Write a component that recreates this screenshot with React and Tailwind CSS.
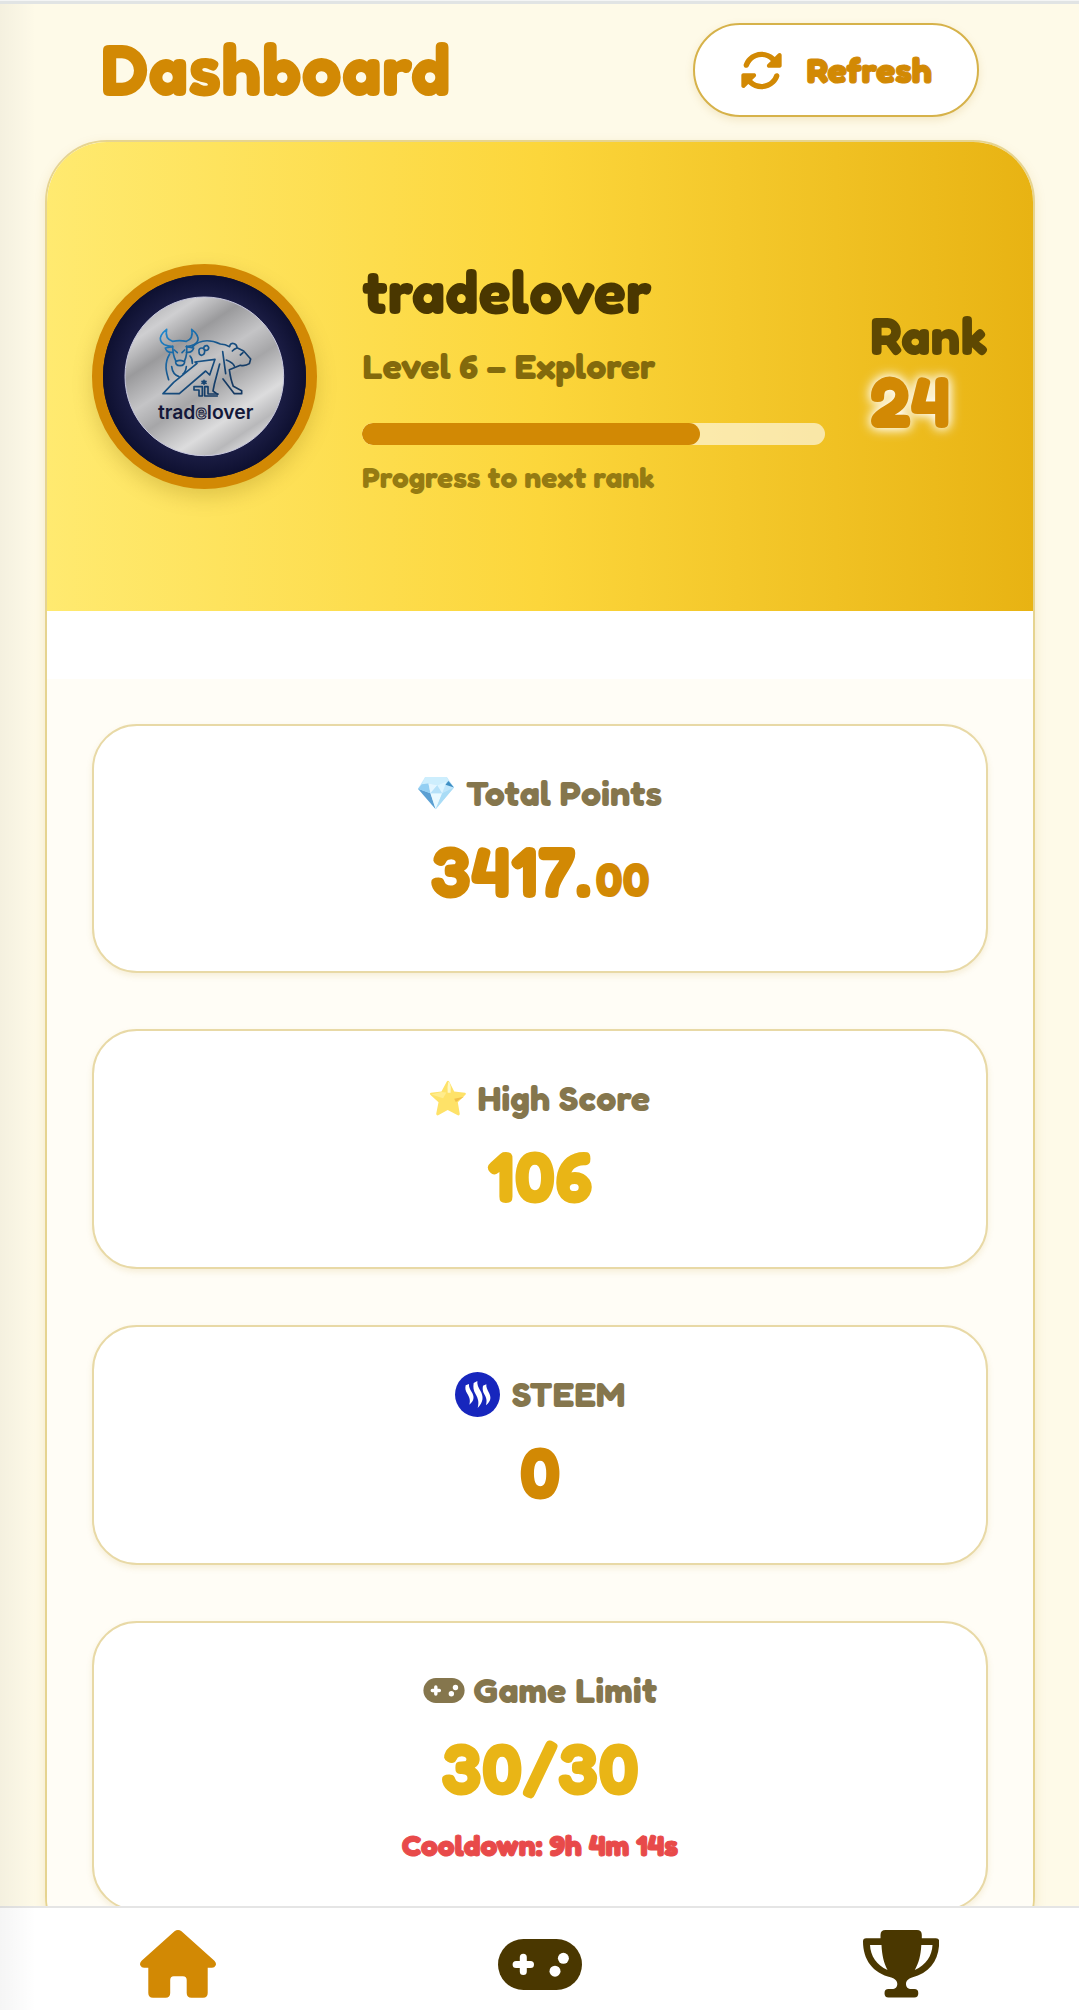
import { useState } from 'react';
import { FaRotate } from 'react-icons/fa6';

// --- ICONS ---
const HomeIcon = ({ className }) => (
  <svg viewBox="0 0 76 68" className={className} fill="currentColor" aria-hidden="true">
    <path d="M34.5 1.3q3.5-2.6 7 0L74.4 30.800q2.400 2.600 1.200 4.700-1.100 2.300-3.600 2.300h-4.300V63q0 4.700-4.700 4.700h-11.500q-4.800 0-4.800-4.700V50q0-3.800-3.800-3.800h-9.200q-3.500 0-3.500 3.800v13q0 4.700-4.700 4.700H13q-4.700 0-4.700-4.700V37.800H4q-2.500 0-3.600-2.300-1.200-2.100 1.200-4.700z" />
  </svg>
);

const GamepadIcon = ({ className }) => (
  <svg viewBox="0 0 84 51" className={className} aria-hidden="true">
    <rect width="84" height="51" rx="25.500" fill="currentColor" />
    <path d="M25.300 18.200v14.400M18.100 25.400h14.400" stroke="#fff" strokeWidth="7" strokeLinecap="round" />
    <circle cx="65.400" cy="19.300" r="5.500" fill="#fff" />
    <circle cx="57" cy="32.200" r="5.500" fill="#fff" />
  </svg>
);

const TrophyIcon = ({ className }) => (
  <svg viewBox="0 0 76 68" className={className} fill="currentColor" fillRule="evenodd" aria-hidden="true">
    <path d="M22.500 0h31.400q4.900 0 4.900 5v3.300H73q3.200 0 3.200 3.200C76.200 29.500 67.500 43 49 47.500c-3.500 1-6 3.300-6 6.500 0 3 2 5 5.300 5h3q4 0 4 4.200t-4 4.200H25.500q-4 0-4-4.200t4-4.200H29c3.300 0 5.300-2 5.300-5 0-3.200-2.500-5.500-6-6.500C9.500 43 0 29.500 0 11.500q0-3.200 3.200-3.200h14.300V5q0-5 5-5zM7 15c.5 11 6.500 20 17.500 25-3.700-7-5.500-15-6-25zM58.300 15c-.5 10-2.500 18-6.500 25C63 35 69 26 69.500 15z" />
  </svg>
);

const DiamondIcon = () => (
  <svg viewBox="116 53 110 100" className="w-9 h-[34px]" aria-hidden="true">
    <path d="M138 54h66l22 32-56 67-54-63z" fill="#bfe6fb" />
    <path d="M138 54h66l5 12-34 13-27-5-20 2z" fill="#cdeefd" />
    <path d="M116 90l38 14 16 49z" fill="#5b9fd2" />
    <path d="M154 104l36 0-20 49z" fill="#e8f9ff" />
    <path d="M190 104l36-18-56 67z" fill="#a9dcf6" />
    <path d="M128 76l20-2 6 30-38-14z" fill="#93cff3" />
    <path d="M148 74l27 5-21 25z" fill="#e4f6ff" />
    <path d="M175 79l15 25h-36z" fill="#b5e1f9" />
    <path d="M175 79l28-11-13 36z" fill="#dcf4ff" />
    <path d="M209 66l17 20-26-8z" fill="#3f8fc4" />
  </svg>
);

const StarIcon = () => (
  <svg viewBox="152 32 110 108" className="w-9 h-9" aria-hidden="true">
    <path d="M203 36q4-6 8 0l15 30 33 4q5 2 1 6l-23 23 6 36q-1 6-6 4l-31-16-29 16q-6 1-6-5l7-35-25-23q-3-4 2-6l32-4z" fill="#fee268" />
    <path d="M208 36q-4 16-2 34l9 0q3-16-3-31z" fill="#fff7c0" />
    <path d="M256 82l-30 6 5 10z" fill="#f2c04a" />
    <path d="M156 75l36 12 10-18-16-1z" fill="#ffec8c" />
  </svg>
);

const SteemIcon = () => (
  <svg viewBox="0 0 135 135" className="w-[45px] h-[45px]" aria-hidden="true">
    <circle cx="67.500" cy="67.500" r="67.500" fill="#1726bd" />
    <g fill="#fff">
      <path d="M32 40l10-4c-1 9 3 16 8 24 8 13 9 25-7 38 4-14 0-23-6-33-6-9-7-16-5-25z" />
      <path d="M56 33l11-6c-1 11 3 19 9 29 10 17 10 33-8 52 5-18 1-28-6-41-7-11-8-22-6-34z" />
      <path d="M84 41l10-4c-1 9 3 16 7 24 8 14 8 26-8 39 4-14 1-23-5-33-5-9-6-17-4-26z" />
    </g>
  </svg>
);

const Avatar = () => (
  <svg viewBox="70 75 609 609" role="img" aria-label="tradelover" className="w-full h-full">
    <defs>
      <linearGradient id="steel" x1="0.2" y1="0.05" x2="0.8" y2="0.95">
        <stop offset="0" stopColor="#b9b9bb" />
        <stop offset="0.1" stopColor="#cfcfd1" />
        <stop offset="0.26" stopColor="#9a9a9c" />
        <stop offset="0.44" stopColor="#c4c4c6" />
        <stop offset="0.58" stopColor="#a6a6a8" />
        <stop offset="0.78" stopColor="#dcdcdd" />
        <stop offset="0.9" stopColor="#b8b8ba" />
        <stop offset="1" stopColor="#e0e0e1" />
      </linearGradient>
      <radialGradient id="navy">
        <stop offset="0.75" stopColor="#1c1e46" />
        <stop offset="1" stopColor="#0e1030" />
      </radialGradient>
      <linearGradient id="ink" gradientUnits="userSpaceOnUse" x1="260" y1="240" x2="400" y2="430">
        <stop offset="0" stopColor="#1f86cc" />
        <stop offset="0.5" stopColor="#17568c" />
        <stop offset="1" stopColor="#153962" />
      </linearGradient>
    </defs>
    <rect x="70" y="75" width="609" height="609" fill="url(#navy)" />
    <circle cx="374" cy="379" r="238" fill="url(#steel)" stroke="#c9c9de" strokeWidth="3" />
    <g fill="none" stroke="url(#ink)" strokeWidth="5" strokeLinejoin="round" strokeLinecap="round">
      {/* horns */}
      <path d="M261 238c-28 22-27 48 18 52M261 238c-4 18-1 30 18 36M336 238c28 22 27 48-16 52M336 238c4 18 1 30-16 36M279 274q20-4 41 0" />
      {/* bull head */}
      <path d="M279 290l-22 4q4 15 22 13M320 290l22 4q-4 15-22 13M279 288q0 26 9 44-2 15 13 15t14-15q8-18 6-44M284 300l9 8M315 300l-8 8M290 334q10-6 22 0" />
      {/* bull body */}
      <path d="M270 312c-18 30-10 55-3 77M276 350q3 24 22 30M320 350q-2 16-10 22M331 318q8 8 7 22" />
      {/* rising arrow */}
      <path d="M250 431l32-34 70-57-6-4 60-8-16 47-12-12-79 68z" />
      {/* bear */}
      <path d="M337 292c25-26 58-22 85-10q15 1 28 8M450 290q2-13 14-9 8 3 8 12l20 10 21 24-4 14q-12 8-27 5l-33 13q4 30 12 50l25 13v9h-22l-34-44M420 342l-16 61-4 20 14 10M440 330q20 8 24 18" />
      <path d="M429 305l9 66M458 303q6-6 12-8M490 308l-8 7" />
      <path d="M358 305q-2-11 9-11 8 0 8 10 0 11-10 12-7-2-7-11zM372 294q2-9 11-7 7 5 2 12-6 5-12-1" />
      {/* monogram */}
      <path d="M343 410h25v28h-10v-18h-15zM375 410h10v22h30M375 410v28h38M373 391v12M367 394l12 6M379 394l-12 6" />
    </g>
    <text x="378" y="508" textAnchor="middle" fontSize="58" className="font-[Inter,sans-serif] font-semibold" fill="#14183a">
      trad<tspan fill="none" stroke="#14183a" strokeWidth="3">e</tspan>lover
    </text>
  </svg>
);

// --- CARD ---
function StatCard({ icon, label, value, cents, tone, note, gap = 'gap-3' }) {
  return (
    <section className={`rounded-[45px] border-2 border-[#e8d9a6] bg-white px-6 pt-[43px] text-center shadow-[0_3px_6px_rgba(180,130,0,0.12)] ${cents ? 'pb-[53px]' : 'pb-11'}`}>
      <h3 className={`flex h-12 items-center justify-center text-[36px] font-bold leading-[48px] text-[#85764d] ${gap}`}>
        {icon}
        {label}
      </h3>
      <p className={`mt-2 h-[93px] text-[72px] font-bold leading-[92px] ${tone}`}>
        {value}
        {cents && <span className="ml-1 text-[48px]">{cents}</span>}
      </p>
      {note && <p className="mt-[10px] text-[30px] font-bold leading-10 text-[#e84a4a] [-webkit-text-stroke:1px]">{note}</p>}
    </section>
  );
}

export default function Dashboard() {
  const [tab, setTab] = useState('home');
  const progress = 73;

  const tabs = [
    { id: 'home', label: 'Home', icon: <HomeIcon className="w-[76px] h-[68px]" /> },
    { id: 'games', label: 'Games', icon: <GamepadIcon className="w-[84px] h-[51px]" /> },
    { id: 'ranks', label: 'Leaderboard', icon: <TrophyIcon className="w-[76px] h-[68px]" /> },
  ];

  return (
    <div className="relative flex h-screen flex-col overflow-hidden bg-[#fefae8] font-[Fredoka,Lato,sans-serif] text-[#4a3700]">
      <div className="h-1 shrink-0 border-t border-[#f4f5f5] bg-[#e1e4e4]" />

      <main className="flex-1 overflow-y-auto pl-[45px] pr-11 pb-16 [scrollbar-width:none]">
        {/* HEADER */}
        <header className="flex items-center justify-between px-14 pt-[19px] pb-[23px]">
          <h1 className="pb-[3px] text-[72px] font-bold leading-[90px] text-[#d28904]">Dashboard</h1>
          <button className="flex h-[94px] items-center gap-6 rounded-full border-2 border-[#d6b24a] bg-white px-[45px] text-[36px] font-bold text-[#d28904] shadow-[0_3px_8px_rgba(180,130,0,0.15)] [-webkit-text-stroke:1px]">
            <FaRotate className="text-[43px]" />
            Refresh
          </button>
        </header>

        <div className="overflow-hidden rounded-[62px] border-2 border-[#e6d490] bg-white shadow-[0_4px_12px_rgba(180,130,0,0.15)]">
          {/* PROFILE */}
          <section className="flex h-[469px] items-center gap-[45px] bg-[linear-gradient(90deg,#ffea70_0%,#fcd63b_50%,#e8b313_100%)] px-[45px]">
            <div className="h-[225px] w-[225px] shrink-0 overflow-hidden rounded-full border-[11px] border-[#d28904] bg-[#0e1030] shadow-[0_8px_20px_rgba(120,90,0,0.22)]">
              <Avatar />
            </div>
            <div className="min-w-0 flex-1">
              <h2 className="text-[60px] font-bold leading-[70px]">tradelover</h2>
              <p className="mt-[18px] text-[36px] font-bold leading-[44px] text-[#836a0c]">Level 6 – Explorer</p>
              <div className="mt-[35px] h-[22px] overflow-hidden rounded-full bg-white/60">
                <div className="h-full rounded-full bg-[#d28904]" style={{ width: `${progress}%` }}></div>
              </div>
              <p className="mt-3 text-[30px] font-bold leading-10 text-[#957b12]">Progress to next rank</p>
            </div>
            <div className="w-[118px] shrink-0 pb-[3px]">
              <p className="text-[53px] font-bold leading-[52px] text-[#5e4802]">Rank</p>
              <p className="text-[72px] font-bold leading-[78px] text-[#d28904] [text-shadow:0_0_14px_#fff,0_0_10px_rgba(255,255,255,0.8)]">24</p>
            </div>
          </section>

          <div className="h-[68px]"></div>

          {/* STATS */}
          <div className="flex flex-col gap-14 bg-[#fffdf6] p-[45px]">
            <StatCard icon={<DiamondIcon />} label="Total Points" value="3417." cents="00" tone="text-[#d28904]" />
            <StatCard icon={<StarIcon />} label="High Score" value="106" tone="text-[#e9b516]" />
            <StatCard icon={<SteemIcon />} label="STEEM" value="0" tone="text-[#d28904]" />
            <StatCard
              icon={<GamepadIcon className="w-[42px] h-[25px]" />}
              label="Game Limit"
              value="30/30"
              tone="text-[#e9b516]"
              note="Cooldown: 9h 4m 14s"
              gap="gap-2"
            />
          </div>
        </div>
      </main>

      {/* BOTTOM NAV */}
      <nav className="flex h-[104px] shrink-0 items-center justify-between border-t-2 border-[#e5e5e5] bg-white px-[13%] pb-3 pt-[22px]">
        {tabs.map((t) => (
          <button
            key={t.id}
            aria-label={t.label}
            onClick={() => setTab(t.id)}
            className={tab === t.id ? 'text-[#d28904]' : 'text-[#4a3700]'}
          >
            {t.icon}
          </button>
        ))}
      </nav>

      {/* side shade */}
      <div className="pointer-events-none absolute bottom-0 left-0 top-1 w-9 bg-linear-to-r from-black/4 to-transparent"></div>
    </div>
  );
}
